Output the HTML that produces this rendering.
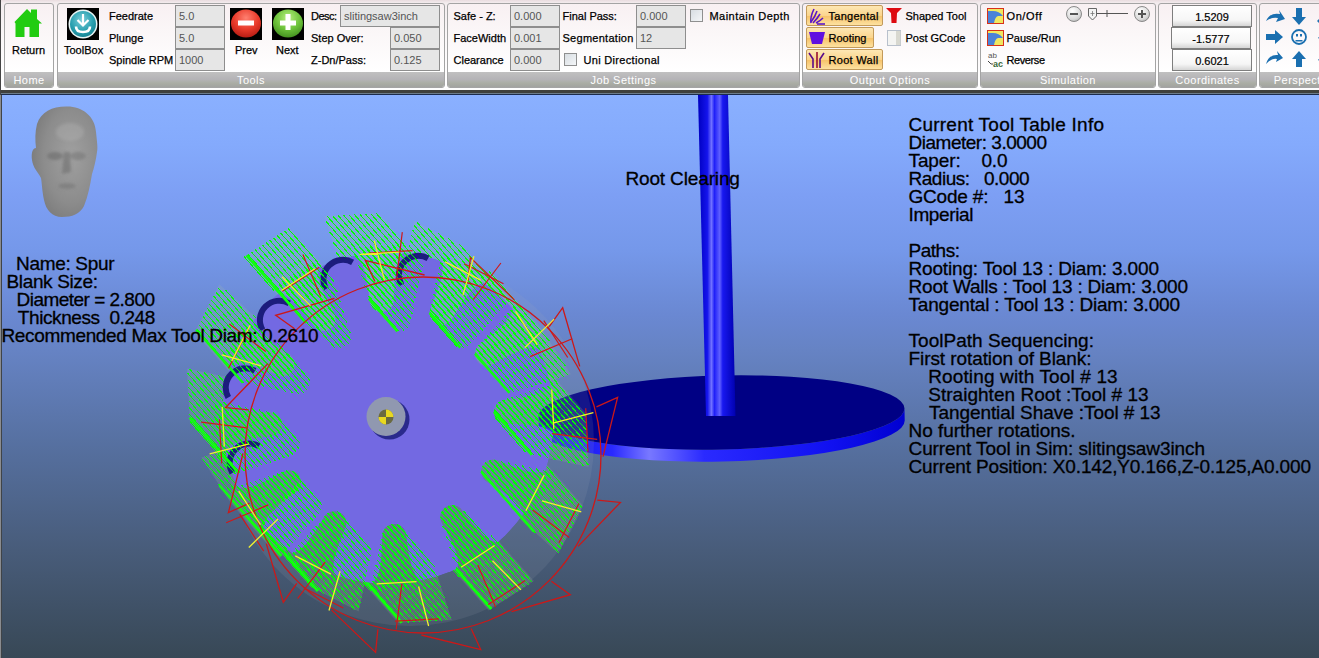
<!DOCTYPE html>
<html><head><meta charset="utf-8">
<style>
*{margin:0;padding:0;box-sizing:border-box}
html,body{width:1319px;height:658px;overflow:hidden;background:#fff;font-family:"Liberation Sans",sans-serif}
.a{position:absolute}
#rib{position:absolute;left:0;top:0;width:1319px;height:95px;background:linear-gradient(#e9dcdf 0px,#f3ecee 3px,#fbf8f9 40px,#ffffff 88px)}
.grp{position:absolute;top:3px;height:85px;border:1px solid #a4a4a4;border-radius:3px;background:linear-gradient(#f8f0f2 0px,#fbf7f8 30px,#ffffff 68px);overflow:hidden}
.grp .lb{position:absolute;left:0;right:0;bottom:0;height:15px;background:linear-gradient(#c0c0c0,#b4b3b6 50%,#aaada4 75%,#a2a3a0);color:#fff;font-size:11px;line-height:16px;text-align:center;overflow:hidden;letter-spacing:0.45px;white-space:nowrap}
.t{position:absolute;font-size:11px;line-height:13px;color:#000;white-space:pre;-webkit-text-stroke:0.25px #000}
.tb{position:absolute;height:22px;border:1px solid #8e8e8e;background:#e6e6e6;font-size:11px;line-height:13px;color:#555;padding:4px 0 0 3px;white-space:pre}
.cb{position:absolute;width:13px;height:13px;border:1px solid #8f8f8f;background:linear-gradient(135deg,#d8dde2,#f4f6f8)}
.ob{position:absolute;height:21px;border:1px solid #c39a5a;border-radius:2px;background:linear-gradient(#fde7b4,#fbd58d 50%,#f7c46c 55%,#fde1a0)}
.cd{position:absolute;height:22px;border:1px solid #7e7e7e;background:linear-gradient(#ffffff 0,#f6f6f6 70%,#e0e0e0 90%,#d6d6d6);font-size:11px;line-height:13px;color:#000;text-align:center;padding-top:5px;-webkit-text-stroke:0.2px #000}
#vp{position:absolute;left:2px;top:95px;width:1317px;height:563px;background:linear-gradient(#8ab0ff 0px,#84aafc 50px,#7d9ff4 100px,#7598ea 155px,#6a88d2 220px,#6683c4 255px,#5670a0 350px,#485c7a 455px,#384856 563px)}
.vt{position:absolute;font-size:19px;line-height:18px;color:#000;white-space:pre;-webkit-text-stroke:0.3px #000}
</style></head><body>
<div id="rib">
  <!-- bottom dark band -->
  <div class="a" style="left:0;top:88px;width:1319px;height:2px;background:#fdfdfd"></div>
  <div class="a" style="left:0;top:90px;width:1319px;height:3px;background:#3f403c"></div>
  <div class="a" style="left:0;top:93px;width:1319px;height:1px;background:#6c7c8a"></div>
  <div class="a" style="left:0;top:94px;width:1319px;height:1px;background:#1c2c4c"></div>
  <div class="a" style="left:0;top:0;width:1px;height:95px;background:#444"></div>

  <!-- Home -->
  <div class="grp" style="left:4px;width:50px"><div class="lb">Home</div></div>
  <!-- Tools -->
  <div class="grp" style="left:57px;width:388px"><div class="lb">Tools</div></div>
  <div class="grp" style="left:447px;width:353px"><div class="lb">Job Settings</div></div>
  <div class="grp" style="left:802px;width:176px"><div class="lb">Output Options</div></div>
  <div class="grp" style="left:980px;width:176px"><div class="lb">Simulation</div></div>
  <div class="grp" style="left:1158px;width:99px"><div class="lb">Coordinates</div></div>
  <div class="grp" style="left:1259px;width:92px"><div class="lb">Perspective</div></div>

  
  <!-- Home content -->
  <svg class="a" style="left:13px;top:7px" width="31" height="32" viewBox="0 0 31 32">
    <path d="M1.5 15 L14 2 L18 6 L18 2.5 L24 2.5 L24 12 L29 16.5 L26 16.5 L26 30 L16.5 30 L16.5 20 L11.5 20 L11.5 30 L2.5 30 L2.5 16.5 Z" fill="#22cc11"/>
  </svg>
  <div class="t" style="left:12px;top:44px">Return</div>
  <!-- ToolBox -->
  <div class="a" style="left:67px;top:8px;width:32px;height:32px;background:#000"></div>
  <svg class="a" style="left:67px;top:8px" width="32" height="32" viewBox="0 0 32 32">
    <defs><radialGradient id="tbg" cx="0.45" cy="0.35" r="0.7"><stop offset="0" stop-color="#7fd0dc"/><stop offset="0.6" stop-color="#2aa0b0"/><stop offset="1" stop-color="#138090"/></radialGradient></defs>
    <circle cx="16" cy="16" r="14.5" fill="#e8f4f4"/><circle cx="16" cy="16" r="13" fill="url(#tbg)"/>
    <path d="M16 6 V17 M10.5 12 L16 17.5 L21.5 12" stroke="#fff" stroke-width="2.2" fill="none"/>
    <path d="M9 18.5 Q9 24 16 24 Q23 24 23 18.5" stroke="#fff" stroke-width="2.6" fill="none"/>
  </svg>
  <div class="t" style="left:64px;top:44px">ToolBox</div>
  <div class="t" style="left:109px;top:9.5px">Feedrate</div>
  <div class="t" style="left:109px;top:31.5px">Plunge</div>
  <div class="t" style="left:109px;top:53.5px">Spindle RPM</div>
  <div class="tb" style="left:175px;top:5px;width:50px">5.0</div>
  <div class="tb" style="left:175px;top:27px;width:50px">5.0</div>
  <div class="tb" style="left:175px;top:49px;width:50px">1000</div>
  <!-- Prev / Next -->
  <div class="a" style="left:230px;top:8px;width:32px;height:32px;background:#000"></div>
  <svg class="a" style="left:230px;top:8px" width="32" height="32" viewBox="0 0 32 32">
    <defs><radialGradient id="rg" cx="0.5" cy="0.3" r="0.75"><stop offset="0" stop-color="#ff8070"/><stop offset="0.55" stop-color="#e83a2a"/><stop offset="1" stop-color="#b01810"/></radialGradient>
    <radialGradient id="gg" cx="0.5" cy="0.3" r="0.75"><stop offset="0" stop-color="#b8f080"/><stop offset="0.55" stop-color="#6cc23a"/><stop offset="1" stop-color="#3e8a1c"/></radialGradient></defs>
    <ellipse cx="16" cy="15.5" rx="15" ry="14" fill="url(#rg)"/>
    <rect x="8" y="12.5" width="16" height="5" fill="#fff"/>
  </svg>
  <div class="t" style="left:235px;top:44px">Prev</div>
  <div class="a" style="left:272px;top:8px;width:32px;height:32px;background:#000"></div>
  <svg class="a" style="left:272px;top:8px" width="32" height="32" viewBox="0 0 32 32">
    <ellipse cx="16" cy="15.5" rx="15" ry="14" fill="url(#gg)"/>
    <rect x="8" y="12.5" width="16" height="5" fill="#fff"/><rect x="13.5" y="6" width="5" height="16" fill="#fff"/>
  </svg>
  <div class="t" style="left:276px;top:44px">Next</div>
  <div class="t" style="left:311px;top:9.5px;letter-spacing:-0.5px">Desc:</div>
  <div class="t" style="left:311px;top:31.5px">Step Over:</div>
  <div class="t" style="left:311px;top:53.5px">Z-Dn/Pass:</div>
  <div class="tb" style="left:340px;top:5px;width:100px">slitingsaw3inch</div>
  <div class="tb" style="left:390px;top:27px;width:50px">0.050</div>
  <div class="tb" style="left:390px;top:49px;width:50px">0.125</div>
  <!-- Job settings -->
  <div class="t" style="left:453.5px;top:9.5px">Safe - Z:</div>
  <div class="t" style="left:453.5px;top:31.5px">FaceWidth</div>
  <div class="t" style="left:453.5px;top:53.5px">Clearance</div>
  <div class="tb" style="left:510px;top:5px;width:50px">0.000</div>
  <div class="tb" style="left:510px;top:27px;width:50px">0.001</div>
  <div class="tb" style="left:510px;top:49px;width:50px">0.000</div>
  <div class="t" style="left:562.5px;top:9.5px">Final Pass:</div>
  <div class="t" style="left:562.5px;top:31.5px;letter-spacing:0.27px">Segmentation</div>
  <div class="tb" style="left:636px;top:5px;width:50px">0.000</div>
  <div class="tb" style="left:636px;top:27px;width:50px">12</div>
  <div class="cb" style="left:564px;top:53px"></div>
  <div class="t" style="left:583.5px;top:53.5px;letter-spacing:0.32px">Uni Directional</div>
  <div class="cb" style="left:690px;top:9px"></div>
  <div class="t" style="left:709.5px;top:9.5px;letter-spacing:0.46px">Maintain Depth</div>
  <!-- Output options -->
  <div class="ob" style="left:806px;top:5px;width:77px"></div>
  <div class="ob" style="left:806px;top:27px;width:68px"></div>
  <div class="ob" style="left:806px;top:49px;width:77px"></div>
  <svg class="a" style="left:808px;top:7px" width="18" height="18" viewBox="0 0 18 18">
    <g stroke="#5a16c8" stroke-width="1.6" fill="none">
    <path d="M3 16 Q2 10 6 2"/><path d="M3 15 Q7 10 9 4"/><path d="M5 16 Q9 12 12 7"/><path d="M8 16 Q12 14 15 11"/><path d="M9 17 L17 17"/></g>
  </svg>
  <div class="t" style="left:828.5px;top:9.5px;letter-spacing:0.28px">Tangental</div>
  <svg class="a" style="left:808px;top:31px" width="18" height="14" viewBox="0 0 18 14">
    <path d="M1 1 L17 1 L14 13 L4 13 Z" fill="#6010e0"/>
  </svg>
  <div class="t" style="left:828.5px;top:31.5px">Rooting</div>
  <svg class="a" style="left:808px;top:51px" width="18" height="18" viewBox="0 0 18 18">
    <g stroke="#5a0a8a" stroke-width="1.6" fill="none"><path d="M1 2 L5 8 L5 17"/><path d="M9 1 L9 17" stroke="#9a1030"/><path d="M16 2 L12 8 L12 17"/></g>
  </svg>
  <div class="t" style="left:828.5px;top:53.5px;letter-spacing:0.3px">Root Wall</div>
  <svg class="a" style="left:886px;top:8px" width="16" height="15" viewBox="0 0 16 15">
    <path d="M0 0 L16 0 L11 5 L10.5 15 L5.5 15 L5 5 Z" fill="#dd0a10"/>
  </svg>
  <div class="t" style="left:905.5px;top:9.5px">Shaped Tool</div>
  <svg class="a" style="left:887px;top:30px" width="15" height="17" viewBox="0 0 15 17">
    <rect x="0.5" y="0.5" width="13" height="15" fill="#f4f4f2" stroke="#b8c0cc"/><rect x="9" y="1" width="4.5" height="14" fill="#d8d8d0"/>
  </svg>
  <div class="t" style="left:905.5px;top:31.5px">Post GCode</div>
  <!-- Simulation -->
  <svg class="a" style="left:987px;top:8px" width="17" height="16" viewBox="0 0 17 16">
    <rect x="0.5" y="0.5" width="16" height="15" fill="#f0e860" stroke="#d83018"/>
    <path d="M1 3 L6 3 Q12 3 16 8 L11 8 Q8 9 7 15 L1 15 Z" fill="#4a82d8"/>
  </svg>
  <div class="t" style="left:1006.5px;top:9.5px;letter-spacing:0.6px">On/Off</div>
  <svg class="a" style="left:987px;top:30px" width="17" height="16" viewBox="0 0 17 16">
    <rect x="0.5" y="0.5" width="16" height="15" fill="#f0e860" stroke="#d83018"/>
    <path d="M1 3 L6 3 Q12 3 16 8 L11 8 Q8 9 7 15 L1 15 Z" fill="#4a82d8"/>
  </svg>
  <div class="t" style="left:1006.5px;top:31.5px">Pause/Run</div>
  <svg class="a" style="left:987px;top:51px" width="18" height="17" viewBox="0 0 18 17">
    <text x="1" y="7" font-family="Liberation Sans" font-size="8" fill="#555">ab</text>
    <text x="6" y="15.5" font-family="Liberation Sans" font-size="9" font-weight="bold" fill="#3a6a3a">ac</text>
    <path d="M1 10 L4 13 L6 13" stroke="#444" fill="none" stroke-width="1"/>
  </svg>
  <div class="t" style="left:1006.5px;top:53.5px;letter-spacing:-0.4px">Reverse</div>
  <svg class="a" style="left:1064px;top:5px" width="90" height="19" viewBox="0 0 90 19">
    <defs><radialGradient id="cg" cx="0.4" cy="0.3" r="0.8"><stop offset="0" stop-color="#ffffff"/><stop offset="0.7" stop-color="#d8d8d8"/><stop offset="1" stop-color="#a8a8a8"/></radialGradient></defs>
    <circle cx="10" cy="9" r="7.5" fill="url(#cg)" stroke="#8a8a8a"/>
    <rect x="6" y="8" width="8" height="2" fill="#555"/>
    <circle cx="78" cy="9" r="7.5" fill="url(#cg)" stroke="#8a8a8a"/>
    <rect x="74" y="8" width="8" height="2" fill="#555"/><rect x="77" y="5" width="2" height="8" fill="#555"/>
    <path d="M33 8.5 H64 M43 5 V12" stroke="#555" stroke-width="1"/>
    <path d="M24.5 3.5 H32.5 V11 L28.5 15 L24.5 11 Z" fill="#f4f4f4" stroke="#666"/>
    <path d="M28.5 6 V11 M26.5 8.5 H30.5" stroke="#777" stroke-width="0.8"/>
  </svg>
  <!-- Coordinates -->
  <div class="cd" style="left:1172px;top:5px;width:80px">1.5209</div>
  <div class="cd" style="left:1171px;top:27px;width:80px">-1.5777</div>
  <div class="cd" style="left:1172px;top:49px;width:80px">0.6021</div>
  <!-- Perspective -->
  <svg class="a" style="left:1262px;top:5px" width="57" height="64" viewBox="0 0 57 64">
    <g fill="#1a6fb0">
      <path d="M4 16 Q8 7 18 9 L17 5 L23 14 L14 17 L16 13 Q9 12 4 16 Z"/>
      <path d="M34 3 H40 V12 H44 L37 20 L30 12 H34 Z"/>
      <path d="M4 29 H13 V25 L21 32 L13 39 V35 H4 Z"/>
      <circle cx="37" cy="32" r="7" fill="none" stroke="#1a6fb0" stroke-width="1.8"/>
      <rect x="34" y="29" width="2" height="2.5"/><rect x="38" y="29" width="2" height="2.5"/><rect x="33.5" y="35" width="7" height="1.5"/>
      <path d="M4 59 Q7 49 16 50 L15 46 L21 53 L14 57 L15 54 Q9 53 4 59 Z"/>
      <path d="M34 62 H40 V54 H44 L37 46 L30 54 H34 Z"/>
      <path d="M55 16 L57 14 V18 Z"/>
      <rect x="56" y="32" width="1" height="1.5" opacity="0.6"/>
      <rect x="56" y="54" width="1" height="1.5" opacity="0.6"/>
    </g>
  </svg>

</div>
<div id="vp"></div>
<div class="a" style="left:0;top:95px;width:1px;height:563px;background:#8a8c90"></div><div class="a" style="left:1px;top:95px;width:1px;height:563px;background:#404448"></div>
<!--SCENE-->
<svg class="a" style="left:0;top:0" width="1319" height="658" viewBox="0 0 1319 658"><clipPath id="vpc"><rect x="2" y="95" width="1317" height="563"/></clipPath><g clip-path="url(#vpc)"><defs>
<radialGradient id="hg" cx="0.6" cy="0.45" r="0.7"><stop offset="0" stop-color="#a0a0a0"/><stop offset="0.6" stop-color="#8c8c8c"/><stop offset="1" stop-color="#767676"/></radialGradient>
<linearGradient id="shaft" x1="0" x2="1" y1="0" y2="0"><stop offset="0" stop-color="#0000c0"/><stop offset="0.25" stop-color="#1414ec"/><stop offset="0.36" stop-color="#7070ff"/><stop offset="0.44" stop-color="#2020f8"/><stop offset="0.58" stop-color="#6060ff"/><stop offset="0.66" stop-color="#1818f0"/><stop offset="1" stop-color="#0000b0"/></linearGradient>
<linearGradient id="rim" x1="0" x2="1" y1="0" y2="0"><stop offset="0" stop-color="#0a0ae0"/><stop offset="0.2" stop-color="#2a2aff"/><stop offset="0.3" stop-color="#7878ff"/><stop offset="0.45" stop-color="#2a2aff"/><stop offset="0.8" stop-color="#1010f0"/><stop offset="1" stop-color="#0000d0"/></linearGradient>
<filter id="blur1" x="-20%" y="-20%" width="140%" height="140%"><feGaussianBlur stdDeviation="1.6"/></filter>
</defs>
<path d="M66 106.5 C82 106 95 116 96 132 C97 142 98 148 97 152 C96 160 94 168 92 174 C90 186 88 196 84 206 C80 214 72 217 62 217 C52 217 46 210 44 200 C42 190 42 184 41 178 C38 172 33 168 32 160 C31 152 33 148 36 148 C35 140 35 132 37 124 C41 112 52 106.5 66 106.5 Z" fill="url(#hg)"/>
<g filter="url(#blur1)"><ellipse cx="55" cy="156" rx="8" ry="4" fill="#6a6a6a" opacity="0.6"/><ellipse cx="78" cy="156" rx="8" ry="4" fill="#707070" opacity="0.5"/><path d="M64 152 L70 152 L71 172 L62 174 Z" fill="#606060" opacity="0.45"/><ellipse cx="67" cy="186" rx="9" ry="3" fill="#6a6a6a" opacity="0.4"/><ellipse cx="70" cy="132" rx="14" ry="9" fill="#b4b4b4" opacity="0.35"/></g>
<g transform="rotate(-1.3 721.5 412.5)">
<path d="M538.5,412.5 A183,37 0 0 0 904.5,412.5 L904.5,424.5 A183,37 0 0 1 538.5,424.5 Z" fill="url(#rim)"/>
<ellipse cx="721.5" cy="412.5" rx="183" ry="37" fill="#000084"/>
</g>
<path d="M698,95 L728,95 L735.5,416 L706,416 Z" fill="url(#shaft)"/>
<circle cx="410.0" cy="442.0" r="184" fill="#a0acb8" opacity="0.13"/>
<path d="M453.4,440.7 L453.7,437.5 L454.7,434.6 L456.5,432.0 L458.9,430.0 L461.7,428.6 L464.8,428.1 L467.9,428.3 L525.8,440.5 L582.9,505.4 L558.4,553.5 L514.5,513.9 L457.4,449.0 L455.3,446.6 L454.0,443.7 Z" fill="#a8c4a8" opacity="0.18"/>
<path d="M412.5,486.1 L412.8,482.9 L413.8,480.0 L415.6,477.4 L418.0,475.4 L420.8,474.0 L423.9,473.4 L427.0,473.7 L430.0,474.7 L432.6,476.5 L476.6,516.0 L533.9,581.1 L488.6,610.6 L431.3,545.4 L413.1,489.1 Z" fill="#a8c4a8" opacity="0.18"/>
<path d="M342.3,559.6 L354.7,501.8 L355.7,498.9 L357.5,496.3 L359.9,494.2 L362.7,492.9 L365.8,492.3 L368.9,492.6 L371.9,493.6 L374.5,495.4 L402.2,526.9 L430.1,558.6 L432.1,561.0 L433.5,563.8 L451.8,620.0 L397.9,622.8 Z" fill="#a8c4a8" opacity="0.18"/>
<path d="M258.1,527.5 L297.8,483.6 L300.1,481.5 L303.0,480.2 L306.1,479.6 L309.2,479.9 L312.1,480.9 L314.7,482.7 L342.5,514.2 L367.2,542.3 L369.2,544.7 L370.5,547.5 L371.1,550.6 L370.9,553.7 L358.7,611.6 L310.6,587.1 Z" fill="#a8c4a8" opacity="0.18"/>
<path d="M201.3,457.5 L257.6,439.3 L260.7,438.8 L263.8,439.0 L266.7,440.0 L269.3,441.8 L318.0,497.2 L320.1,499.5 L321.4,502.4 L322.0,505.4 L321.7,508.6 L320.7,511.5 L318.9,514.1 L279.4,558.1 L258.5,534.3 L230.7,502.8 Z" fill="#a8c4a8" opacity="0.18"/>
<path d="M187.1,368.5 L244.9,380.9 L247.9,382.0 L250.4,383.7 L295.8,435.3 L297.8,437.6 L299.2,440.5 L299.7,443.5 L299.5,446.7 L298.5,449.6 L296.7,452.2 L294.3,454.2 L291.5,455.6 L235.2,474.0 L217.6,454.0 L189.9,422.4 Z" fill="#a8c4a8" opacity="0.18"/>
<path d="M194.7,332.4 L219.3,284.3 L263.1,324.0 L306.4,373.2 L308.5,375.6 L309.8,378.4 L310.4,381.5 L310.1,384.6 L309.1,387.5 L307.3,390.1 L304.9,392.2 L302.1,393.5 L299.0,394.1 L295.9,393.8 L238.0,381.6 L222.5,364.0 Z" fill="#a8c4a8" opacity="0.18"/>
<path d="M243.9,256.9 L289.2,227.5 L332.3,276.5 L350.5,332.8 L351.1,335.9 L350.8,339.0 L349.8,341.9 L348.0,344.5 L345.6,346.5 L342.8,347.9 L339.7,348.5 L336.6,348.2 L333.6,347.2 L331.1,345.4 L287.0,305.9 L271.7,288.5 Z" fill="#a8c4a8" opacity="0.18"/>
<path d="M324.3,216.1 L378.2,213.3 L423.0,264.2 L410.6,322.0 L409.6,325.0 L407.8,327.6 L405.4,329.6 L402.6,331.0 L399.5,331.5 L396.4,331.3 L393.4,330.2 L390.9,328.5 L346.0,277.5 L344.0,275.2 L342.7,272.3 Z" fill="#a8c4a8" opacity="0.18"/>
<path d="M401.8,282.0 L402.1,278.8 L414.3,221.0 L462.4,245.5 L490.1,277.0 L510.4,300.0 L470.7,343.9 L468.3,345.9 L465.5,347.2 L462.4,347.8 L459.3,347.6 L456.3,346.5 L453.8,344.8 L405.8,290.2 L403.8,287.9 L402.4,285.0 Z" fill="#a8c4a8" opacity="0.18"/>
<path d="M447.2,322.8 L447.5,319.7 L448.5,316.8 L450.3,314.2 L489.8,270.1 L517.5,301.7 L541.5,328.9 L570.9,374.2 L514.6,392.4 L511.6,393.0 L508.4,392.7 L505.5,391.7 L502.9,389.9 L478.9,362.7 L451.2,331.1 L449.2,328.7 L447.8,325.9 Z" fill="#a8c4a8" opacity="0.18"/>
<path d="M466.1,380.9 L466.4,377.8 L467.4,374.8 L469.2,372.3 L471.6,370.2 L474.4,368.9 L530.6,350.5 L585.7,413.1 L588.5,467.0 L530.7,454.6 L527.7,453.6 L525.1,451.8 L470.1,389.2 L468.0,386.8 L466.7,384.0 Z" fill="#a8c4a8" opacity="0.18"/>
<path d="M523.3,440.0 L552.8,473.5 M516.3,438.5 L550.7,477.6 M509.2,437.0 L548.6,481.7 M502.2,435.5 L546.5,485.8 M495.2,434.1 L544.4,490.0 M488.2,432.6 L542.3,494.1 M481.1,431.1 L540.2,498.2 M474.1,429.6 L538.1,502.3 M467.2,428.2 L536.0,506.4 M461.8,428.6 L533.9,510.6 M457.9,430.8 L531.8,514.7 M455.1,434.0 L529.7,518.8 M453.6,438.8 L510.1,503.0" stroke="#00ff00" stroke-width="1" shape-rendering="crispEdges"/>
<path d="M453.5,440.0 L534.0,531.5" stroke="#10ff10" stroke-width="2.5"/>
<path d="M467.1,507.5 L503.1,548.4 M439.9,483.1 L499.4,550.7 M425.8,473.6 L495.8,553.1 M420.5,474.1 L492.1,555.5 M416.8,476.4 L488.5,557.8 M414.0,479.7 L484.8,560.2 M412.6,484.7 L481.2,562.6 M477.5,564.9 L414.4,493.2 M473.9,567.3 L417.7,503.5 M470.2,569.7 L421.1,513.8 M466.6,572.0 L424.4,524.1 M463.0,574.4 L427.7,534.4 M459.3,576.8 L431.0,544.6" stroke="#00ff00" stroke-width="1" shape-rendering="crispEdges"/>
<path d="M491.1,608.9 L429.0,538.3" stroke="#10ff10" stroke-width="2.5"/>
<path d="M370.5,493.1 L406.1,533.6 M364.3,492.6 L409.4,543.9 M360.0,494.2 L412.8,554.3 M356.9,497.2 L416.2,564.6 M354.8,501.4 L419.6,575.0 M353.7,506.6 L423.0,585.3 M352.5,511.8 L420.1,588.6 M351.4,517.0 L414.6,588.8 M350.3,522.3 L409.1,589.1 M349.2,527.5 L403.7,589.4 M348.1,532.8 L398.2,589.7 M346.9,538.0 L392.7,590.0 M345.8,543.2 L387.2,590.3 M344.7,548.5 L381.8,590.6 M343.6,553.7 L376.3,590.9 M342.4,558.9 L370.8,591.1" stroke="#00ff00" stroke-width="1" shape-rendering="crispEdges"/>
<path d="M343.1,556.0 L401.7,622.6" stroke="#10ff10" stroke-width="2.5"/>
<path d="M310.7,480.4 L346.1,520.6 M304.5,479.9 L345.9,526.9 M300.2,481.5 L344.8,532.2 M297.0,484.4 L343.7,537.4 M294.1,487.6 L342.6,542.7 M291.2,490.8 L341.5,547.9 M288.3,494.0 L340.4,553.2 M285.4,497.2 L339.3,558.4 M282.5,500.5 L338.2,563.7 M279.6,503.7 L337.0,568.9 M276.7,506.9 L335.9,574.2 M273.8,510.1 L334.8,579.4 M270.9,513.3 L331.7,582.3 M268.0,516.5 L321.3,577.0 M265.1,519.7 L310.9,571.8 M262.2,522.9 L300.5,566.5 M259.3,526.1 L290.1,561.2" stroke="#00ff00" stroke-width="1" shape-rendering="crispEdges"/>
<path d="M260.1,525.2 L317.8,590.8" stroke="#10ff10" stroke-width="2.5"/>
<path d="M265.3,439.5 L300.7,479.7 M259.1,439.0 L300.4,485.9 M254.5,440.3 L298.2,489.9 M250.1,441.7 L295.4,493.2 M245.6,443.2 L292.5,496.4 M241.2,444.6 L289.6,499.6 M236.7,446.1 L286.7,502.9 M232.2,447.5 L283.8,506.1 M227.8,449.0 L280.9,509.3 M223.3,450.4 L278.0,512.5 M218.9,451.8 L275.1,515.8 M214.4,453.3 L272.2,519.0 M209.9,454.7 L269.3,522.2 M205.5,456.2 L266.4,525.4 M263.5,528.7 L202.3,459.1 M260.7,531.9 L218.5,483.9" stroke="#00ff00" stroke-width="1" shape-rendering="crispEdges"/>
<path d="M281.4,555.9 L219.5,485.5" stroke="#10ff10" stroke-width="2.5"/>
<path d="M246.4,381.5 L281.8,421.6 M239.2,379.7 L281.5,427.8 M232.1,378.2 L279.3,431.8 M225.0,376.6 L276.0,434.6 M218.0,375.1 L271.8,436.3 M210.9,373.6 L267.3,437.7 M203.9,372.1 L262.9,439.2 M196.8,370.6 L258.4,440.6 M189.7,369.1 L254.0,442.1 M249.5,443.5 L187.3,372.8 M245.1,445.0 L187.7,379.7 M240.6,446.5 L188.0,386.7 M236.2,447.9 L188.4,393.6 M231.7,449.4 L188.8,400.5 M227.3,450.8 L189.1,407.4 M222.8,452.3 L189.5,414.4 M218.4,453.7 L189.8,421.3" stroke="#00ff00" stroke-width="1" shape-rendering="crispEdges"/>
<path d="M238.4,472.9 L189.6,417.6" stroke="#10ff10" stroke-width="2.5"/>
<path d="M253.4,315.2 L294.5,361.9 M225.4,289.9 L294.2,368.1 M217.6,287.5 L292.0,372.1 M215.5,291.7 L288.7,374.8 M213.4,295.8 L284.3,376.3 M211.3,299.9 L278.0,375.7 M209.2,304.0 L271.0,374.2 M207.1,308.2 L263.9,372.7 M205.0,312.3 L256.9,371.2 M202.9,316.4 L249.9,369.7 M200.8,320.5 L242.8,368.3 M198.7,324.6 L235.8,366.8 M196.6,328.8 L228.8,365.3" stroke="#00ff00" stroke-width="1" shape-rendering="crispEdges"/>
<path d="M196.2,329.6 L242.9,382.7" stroke="#10ff10" stroke-width="2.5"/>
<path d="M287.9,228.3 L318.1,262.6 M284.3,230.7 L321.4,272.9 M280.7,233.1 L324.8,283.2 M277.0,235.4 L328.1,293.5 M273.4,237.8 L331.4,303.8 M269.7,240.2 L334.7,314.0 M266.1,242.5 L335.5,321.4 M262.4,244.9 L333.6,325.7 M258.8,247.3 L330.6,328.8 M255.1,249.6 L326.4,330.6 M251.5,252.0 L320.6,330.6 M247.9,254.4 L301.0,314.7 M244.2,256.7 L273.8,290.3" stroke="#00ff00" stroke-width="1" shape-rendering="crispEdges"/>
<path d="M246.5,255.3 L306.0,322.9" stroke="#10ff10" stroke-width="2.5"/>
<path d="M376.3,213.4 L405.6,246.6 M370.8,213.7 L404.4,251.9 M365.4,214.0 L403.3,257.1 M359.9,214.3 L402.2,262.3 M354.4,214.5 L401.1,267.6 M348.9,214.8 L400.0,272.8 M343.5,215.1 L398.8,278.1 M338.0,215.4 L397.7,283.3 M332.5,215.7 L396.6,288.5 M327.0,216.0 L395.5,293.8 M394.3,299.0 L326.0,221.3 M393.1,304.0 L329.4,231.7 M390.9,308.0 L332.8,242.0 M387.4,310.7 L336.1,252.4 M382.9,312.1 L339.5,262.7 M375.8,310.5 L343.1,273.3" stroke="#00ff00" stroke-width="1" shape-rendering="crispEdges"/>
<path d="M397.4,331.4 L341.0,267.3" stroke="#10ff10" stroke-width="2.5"/>
<path d="M458.8,243.6 L489.1,278.1 M448.4,238.3 L486.2,281.3 M438.0,233.0 L483.3,284.5 M427.6,227.8 L480.4,287.8 M417.2,222.5 L477.5,291.0 M413.5,224.7 L474.6,294.2 M412.4,230.0 L471.7,297.4 M411.3,235.2 L468.8,300.6 M410.2,240.5 L465.9,303.8 M409.1,245.7 L463.0,307.0 M408.0,251.0 L460.1,310.2 M406.9,256.2 L457.2,313.5 M405.7,261.5 L454.3,316.7 M404.6,266.7 L451.4,319.9 M403.5,272.0 L448.3,322.8 M402.4,277.2 L444.0,324.5 M438.1,324.2 L402.1,283.4" stroke="#00ff00" stroke-width="1" shape-rendering="crispEdges"/>
<path d="M401.9,281.3 L460.3,347.7" stroke="#10ff10" stroke-width="2.5"/>
<path d="M488.8,271.3 L523.2,310.3 M485.9,274.5 L539.3,335.2 M483.0,277.7 L544.6,347.7 M480.1,280.9 L540.2,349.2 M477.2,284.2 L535.7,350.6 M474.3,287.4 L531.2,352.0 M471.4,290.6 L526.8,353.5 M468.5,293.8 L522.3,354.9 M465.7,297.1 L517.9,356.4 M462.8,300.3 L513.4,357.8 M459.9,303.5 L508.9,359.2 M457.0,306.7 L504.5,360.7 M454.1,309.9 L500.0,362.1 M451.2,313.2 L495.6,363.6 M448.6,316.7 L491.1,365.0 M447.3,321.8 L485.9,365.6" stroke="#00ff00" stroke-width="1" shape-rendering="crispEdges"/>
<path d="M447.3,322.1 L509.5,392.8" stroke="#10ff10" stroke-width="2.5"/>
<path d="M529.1,351.0 L558.5,384.4 M524.6,352.5 L558.8,391.4 M520.2,353.9 L559.2,398.3 M515.7,355.4 L559.6,405.2 M511.3,356.8 L559.9,412.1 M506.8,358.3 L560.3,419.1 M502.4,359.7 L560.7,426.0 M497.9,361.2 L561.0,432.9 M493.5,362.6 L557.2,435.1 M489.0,364.1 L550.2,433.6 M484.6,365.6 L543.1,432.1 M480.1,367.0 L536.1,430.6 M475.7,368.5 L529.0,429.1 M471.5,370.3 L521.9,427.5 M468.5,373.3 L514.9,426.0 M466.5,377.5 L507.8,424.5 M500.2,422.4 L467.0,384.6" stroke="#00ff00" stroke-width="1" shape-rendering="crispEdges"/>
<path d="M466.2,380.2 L531.8,454.9" stroke="#10ff10" stroke-width="2.5"/>
<mask id="gm" maskUnits="userSpaceOnUse" x="0" y="0" width="1319" height="658"><rect x="0" y="0" width="1319" height="658" fill="black"/>
<circle cx="388.0" cy="418.0" r="166" fill="white"/>
<path d="M487.7,482.3 L485.1,480.5 L483.1,478.1 L481.7,475.3 L481.2,472.2 L481.4,469.1 L482.4,466.1 L484.2,463.5 L486.6,461.5 L489.4,460.2 L492.5,459.6 L495.6,459.8 L498.6,460.9 L498.6,460.9 L514.4,467.3 L528.9,471.8 L537.4,472.8 L547.3,471.1 L560.3,467.6 L611.1,486.8 L574.8,558.1 L529.4,528.2 L524.6,515.6 L520.2,506.7 L514.4,500.4 L502.2,491.3 L487.7,482.3 Z" fill="black"/>
<path d="M442.2,523.5 L440.9,520.7 L440.3,517.6 L440.5,514.5 L441.6,511.5 L443.3,508.9 L445.7,506.9 L448.6,505.6 L451.6,505.0 L454.8,505.2 L457.7,506.3 L460.3,508.0 L462.3,510.4 L462.3,510.4 L472.8,523.9 L483.1,535.1 L490.0,540.2 L499.4,543.6 L512.4,547.1 L546.8,589.1 L479.7,632.7 L455.3,584.1 L457.4,570.8 L458.1,560.9 L456.3,552.5 L450.2,538.6 L442.2,523.5 Z" fill="black"/>
<path d="M382.2,536.5 L382.4,533.3 L383.5,530.4 L385.3,527.8 L387.6,525.8 L390.5,524.4 L393.5,523.9 L396.7,524.1 L399.6,525.1 L402.2,526.9 L404.2,529.3 L405.6,532.1 L406.2,535.2 L406.2,535.2 L408.5,552.1 L411.8,567.0 L415.2,574.8 L421.7,582.5 L431.2,592.0 L440.0,645.6 L360.1,649.8 L363.3,595.5 L371.7,585.1 L377.3,576.8 L379.9,568.6 L381.6,553.5 L382.2,536.5 Z" fill="black"/>
<path d="M323.7,517.7 L325.5,515.1 L327.9,513.1 L330.7,511.7 L333.8,511.2 L336.9,511.4 L339.9,512.4 L342.5,514.2 L344.5,516.6 L345.8,519.4 L346.4,522.5 L346.2,525.6 L345.1,528.6 L345.1,528.6 L338.7,544.4 L334.2,558.9 L333.2,567.4 L334.9,577.3 L338.4,590.3 L319.2,641.1 L247.9,604.8 L277.8,559.4 L290.4,554.6 L299.3,550.2 L305.6,544.4 L314.7,532.2 L323.7,517.7 Z" fill="black"/>
<path d="M282.5,472.2 L285.3,470.9 L288.4,470.3 L291.5,470.5 L294.5,471.6 L297.1,473.3 L299.1,475.7 L300.4,478.6 L301.0,481.6 L300.8,484.8 L299.7,487.7 L298.0,490.3 L295.6,492.3 L295.6,492.3 L282.1,502.8 L270.9,513.1 L265.8,520.0 L262.4,529.4 L258.9,542.4 L216.9,576.8 L173.3,509.7 L221.9,485.3 L235.2,487.4 L245.1,488.1 L253.5,486.3 L267.4,480.2 L282.5,472.2 Z" fill="black"/>
<path d="M269.5,412.2 L272.7,412.4 L275.6,413.5 L278.2,415.3 L280.2,417.6 L281.6,420.5 L282.1,423.5 L281.9,426.7 L280.9,429.6 L279.1,432.2 L276.7,434.2 L273.9,435.6 L270.8,436.2 L270.8,436.2 L253.9,438.5 L239.0,441.8 L231.2,445.2 L223.5,451.7 L214.0,461.2 L160.4,470.0 L156.2,390.1 L210.5,393.3 L220.9,401.7 L229.2,407.3 L237.4,409.9 L252.5,411.6 L269.5,412.2 Z" fill="black"/>
<path d="M288.3,353.7 L290.9,355.5 L292.9,357.9 L294.3,360.7 L294.8,363.8 L294.6,366.9 L293.6,369.9 L291.8,372.5 L289.4,374.5 L286.6,375.8 L283.5,376.4 L280.4,376.2 L277.4,375.1 L277.4,375.1 L261.6,368.7 L247.1,364.2 L238.6,363.2 L228.7,364.9 L215.7,368.4 L164.9,349.2 L201.2,277.9 L246.6,307.8 L251.4,320.4 L255.8,329.3 L261.6,335.6 L273.8,344.7 L288.3,353.7 Z" fill="black"/>
<path d="M333.8,312.5 L335.1,315.3 L335.7,318.4 L335.5,321.5 L334.4,324.5 L332.7,327.1 L330.3,329.1 L327.4,330.4 L324.4,331.0 L321.2,330.8 L318.3,329.7 L315.7,328.0 L313.7,325.6 L313.7,325.6 L303.2,312.1 L292.9,300.9 L286.0,295.8 L276.6,292.4 L263.6,288.9 L229.2,246.9 L296.3,203.3 L320.7,251.9 L318.6,265.2 L317.9,275.1 L319.7,283.5 L325.8,297.4 L333.8,312.5 Z" fill="black"/>
<path d="M393.8,299.5 L393.6,302.7 L392.5,305.6 L390.7,308.2 L388.4,310.2 L385.5,311.6 L382.5,312.1 L379.3,311.9 L376.4,310.9 L373.8,309.1 L371.8,306.7 L370.4,303.9 L369.8,300.8 L369.8,300.8 L367.5,283.9 L364.2,269.0 L360.8,261.2 L354.3,253.5 L344.8,244.0 L336.0,190.4 L415.9,186.2 L412.7,240.5 L404.3,250.9 L398.7,259.2 L396.1,267.4 L394.4,282.5 L393.8,299.5 Z" fill="black"/>
<path d="M452.3,318.3 L450.5,320.9 L448.1,322.9 L445.3,324.3 L442.2,324.8 L439.1,324.6 L436.1,323.6 L433.5,321.8 L431.5,319.4 L430.2,316.6 L429.6,313.5 L429.8,310.4 L430.9,307.4 L430.9,307.4 L437.3,291.6 L441.8,277.1 L442.8,268.6 L441.1,258.7 L437.6,245.7 L456.8,194.9 L528.1,231.2 L498.2,276.6 L485.6,281.4 L476.7,285.8 L470.4,291.6 L461.3,303.8 L452.3,318.3 Z" fill="black"/>
<path d="M493.5,363.8 L490.7,365.1 L487.6,365.7 L484.5,365.5 L481.5,364.4 L478.9,362.7 L476.9,360.3 L475.6,357.4 L475.0,354.4 L475.2,351.2 L476.3,348.3 L478.0,345.7 L480.4,343.7 L480.4,343.7 L493.9,333.2 L505.1,322.9 L510.2,316.0 L513.6,306.6 L517.1,293.6 L559.1,259.2 L602.7,326.3 L554.1,350.7 L540.8,348.6 L530.9,347.9 L522.5,349.7 L508.6,355.8 L493.5,363.8 Z" fill="black"/>
<path d="M506.5,423.8 L503.3,423.6 L500.4,422.5 L497.8,420.7 L495.8,418.4 L494.4,415.5 L493.9,412.5 L494.1,409.3 L495.1,406.4 L496.9,403.8 L499.3,401.8 L502.1,400.4 L505.2,399.8 L505.2,399.8 L522.1,397.5 L537.0,394.2 L544.8,390.8 L552.5,384.3 L562.0,374.8 L615.6,366.0 L619.8,445.9 L565.5,442.7 L555.1,434.3 L546.8,428.7 L538.6,426.1 L523.5,424.4 L506.5,423.8 Z" fill="black"/>
</mask>
<circle cx="388.0" cy="418.0" r="166" fill="#7369e2" mask="url(#gm)"/>
<path d="M232.3,472.9 A19.5,19.5 0 0 1 258.9,446.2" stroke="#1c1c7c" stroke-width="6" fill="none"/>
<path d="M228.3,397.4 A19.5,19.5 0 0 1 254.9,370.8" stroke="#1c1c7c" stroke-width="6" fill="none"/>
<path d="M262.6,330.1 A19.5,19.5 0 0 1 289.3,303.4" stroke="#1c1c7c" stroke-width="6" fill="none"/>
<path d="M326.0,288.9 A19.5,19.5 0 0 1 352.6,262.3" stroke="#1c1c7c" stroke-width="6" fill="none"/>
<path d="M401.5,284.9 A19.5,19.5 0 0 1 428.1,258.3" stroke="#1c1c7c" stroke-width="6" fill="none"/>
<path d="M550.1,471.3 L581.9,507.4 M543.0,469.8 L579.8,511.5 M536.0,468.3 L577.7,515.7 M529.0,466.9 L575.6,519.8 M521.9,465.4 L573.5,523.9 M514.9,463.9 L571.4,528.0 M507.9,462.4 L569.3,532.2 M500.9,460.9 L567.2,536.3 M494.0,459.7 L565.1,540.4 M488.9,460.4 L563.0,544.5 M485.2,462.7 L560.9,548.6 M482.5,466.1 L558.8,552.8 M481.2,471.2 L535.5,532.9" stroke="#00ff00" stroke-width="1" shape-rendering="crispEdges"/>
<path d="M491.0,535.6 L532.1,582.3 M463.8,511.2 L528.5,584.7 M452.7,505.1 L524.8,587.0 M447.7,505.9 L521.2,589.4 M444.1,508.3 L517.5,591.8 M441.5,511.8 L513.9,594.1 M440.3,517.1 L510.2,596.5 M506.6,598.9 L442.6,526.2 M503.0,601.2 L446.0,536.5 M499.3,603.6 L449.3,546.8 M495.7,606.0 L452.6,557.0 M492.0,608.3 L455.9,567.3" stroke="#00ff00" stroke-width="1" shape-rendering="crispEdges"/>
<path d="M397.0,524.2 L434.4,566.7 M391.3,524.3 L437.8,577.0 M387.2,526.1 L441.2,587.4 M384.3,529.2 L444.5,597.7 M382.4,533.6 L447.9,608.1 M381.3,538.8 L451.3,618.5 M380.1,544.1 L447.2,620.3 M379.0,549.3 L441.7,620.5 M377.9,554.5 L436.2,620.8 M376.8,559.8 L430.7,621.1 M375.6,565.0 L425.3,621.4 M374.5,570.2 L419.8,621.7 M373.4,575.5 L414.3,622.0 M372.3,580.7 L408.8,622.3 M371.2,585.9 L403.4,622.6" stroke="#00ff00" stroke-width="1" shape-rendering="crispEdges"/>
<path d="M337.3,511.5 L371.0,549.8 M331.6,511.6 L370.5,555.7 M327.5,513.4 L369.3,561.0 M324.4,516.4 L368.2,566.2 M321.5,519.6 L367.1,571.5 M318.6,522.8 L366.0,576.7 M315.7,526.0 L364.9,582.0 M312.8,529.2 L363.8,587.2 M309.9,532.4 L362.7,592.5 M307.0,535.6 L361.6,597.7 M304.1,538.9 L360.5,603.0 M301.2,542.1 L359.4,608.2 M298.3,545.3 L354.9,609.7 M295.4,548.5 L344.5,604.4 M292.5,551.7 L334.2,599.1 M289.5,554.9 L323.8,593.8 M286.6,558.1 L313.4,588.5" stroke="#00ff00" stroke-width="1" shape-rendering="crispEdges"/>
<path d="M291.9,470.7 L321.8,504.7 M286.2,470.7 L321.1,510.3 M281.7,472.0 L318.8,514.2 M277.2,473.5 L315.9,517.5 M272.7,474.9 L313.0,520.7 M268.3,476.4 L310.1,523.9 M263.8,477.8 L307.2,527.1 M259.4,479.2 L304.3,530.3 M254.9,480.7 L301.4,533.6 M250.4,482.1 L298.5,536.8 M246.0,483.6 L295.7,540.0 M241.5,485.0 L292.8,543.2 M237.1,486.4 L289.9,546.5 M232.6,487.9 L287.0,549.7 M284.1,552.9 L232.3,494.1 M281.2,556.1 L248.4,518.9" stroke="#00ff00" stroke-width="1" shape-rendering="crispEdges"/>
<path d="M273.0,412.6 L299.6,442.8 M265.9,411.0 L298.9,448.4 M258.9,409.5 L296.5,452.3 M251.8,408.0 L293.0,454.8 M244.7,406.5 L288.8,456.5 M237.7,404.9 L284.3,457.9 M230.6,403.4 L279.9,459.4 M223.6,401.9 L275.4,460.8 M216.5,400.4 L271.0,462.3 M266.5,463.7 L215.1,405.3 M262.1,465.2 L215.5,412.2 M257.6,466.7 L215.8,419.2 M253.2,468.1 L216.2,426.1 M248.7,469.6 L216.6,433.0 M244.3,471.0 L216.9,439.9 M239.8,472.5 L217.3,446.8 M235.4,473.9 L217.6,453.8" stroke="#00ff00" stroke-width="1" shape-rendering="crispEdges"/>
<path d="M277.2,343.2 L310.2,380.7 M249.3,317.9 L309.5,386.4 M245.1,319.6 L307.2,390.2 M243.0,323.8 L303.7,392.8 M240.9,327.9 L299.1,394.1 M238.8,332.0 L292.6,393.1 M236.7,336.1 L285.5,391.6 M234.6,340.3 L278.5,390.2 M232.5,344.4 L271.5,388.7 M230.4,348.5 L264.4,387.2 M228.3,352.6 L257.4,385.7 M226.2,356.7 L250.4,384.2 M224.1,360.9 L243.3,382.8" stroke="#00ff00" stroke-width="1" shape-rendering="crispEdges"/>
<path d="M315.2,260.2 L333.9,281.5 M311.5,262.6 L337.3,291.8 M307.9,264.9 L340.6,302.1 M304.3,267.3 L343.9,312.4 M300.6,269.7 L347.2,322.6 M297.0,272.0 L350.5,332.9 M293.3,274.4 L350.6,339.5 M289.7,276.8 L348.6,343.7 M286.0,279.1 L345.4,346.6 M282.4,281.5 L341.1,348.2 M278.7,283.9 L334.8,347.6 M275.1,286.2 L312.5,328.8" stroke="#00ff00" stroke-width="1" shape-rendering="crispEdges"/>
<path d="M403.3,245.0 L422.5,266.8 M397.8,245.2 L421.4,272.0 M392.3,245.5 L420.2,277.2 M386.9,245.8 L419.1,282.5 M381.4,246.1 L418.0,287.7 M375.9,246.4 L416.9,292.9 M370.4,246.7 L415.7,298.2 M365.0,247.0 L414.6,303.4 M359.5,247.3 L413.5,308.6 M354.0,247.5 L412.4,313.9 M411.3,319.1 L354.2,254.3 M409.9,324.1 L357.6,264.6 M407.5,327.8 L361.0,275.0 M403.9,330.3 L364.4,285.3 M399.3,331.5 L367.7,295.7" stroke="#00ff00" stroke-width="1" shape-rendering="crispEdges"/>
<path d="M485.1,274.4 L508.9,301.5 M474.7,269.1 L506.0,304.8 M464.3,263.8 L503.1,308.0 M453.9,258.5 L500.2,311.2 M443.5,253.3 L497.3,314.4 M441.1,257.0 L494.4,317.6 M440.0,262.2 L491.5,320.8 M438.9,267.5 L488.6,324.0 M437.8,272.7 L485.7,327.2 M436.7,278.0 L482.8,330.4 M435.6,283.2 L479.9,333.7 M434.4,288.5 L477.0,336.9 M433.3,293.7 L474.1,340.1 M432.2,299.0 L471.2,343.3 M431.1,304.2 L467.9,346.1 M430.0,309.5 L463.6,347.6 M457.1,346.8 L430.1,316.1" stroke="#00ff00" stroke-width="1" shape-rendering="crispEdges"/>
<path d="M516.1,303.3 L549.4,341.1 M513.2,306.5 L565.5,365.9 M510.4,309.7 L568.0,375.2 M507.5,312.9 L563.5,376.6 M504.6,316.1 L559.0,378.0 M501.7,319.4 L554.6,379.5 M498.8,322.6 L550.1,380.9 M495.9,325.8 L545.7,382.4 M493.0,329.0 L541.2,383.8 M490.1,332.3 L536.7,385.2 M487.2,335.5 L532.3,386.7 M484.3,338.7 L527.8,388.1 M481.4,341.9 L523.4,389.6 M478.5,345.1 L518.9,391.0 M476.1,348.9 L514.4,392.4 M475.0,354.1 L509.0,392.8" stroke="#00ff00" stroke-width="1" shape-rendering="crispEdges"/>
<path d="M556.2,382.7 L585.9,416.5 M551.7,384.2 L586.2,423.4 M547.3,385.7 L586.6,430.3 M542.8,387.1 L586.9,437.2 M538.4,388.6 L587.3,444.1 M533.9,390.0 L587.7,451.1 M529.5,391.5 L588.0,458.0 M525.0,392.9 L588.4,464.9 M520.6,394.4 L583.6,466.0 M516.1,395.8 L576.5,464.4 M511.7,397.3 L569.5,462.9 M507.2,398.7 L562.4,461.4 M502.8,400.2 L555.3,459.9 M498.8,402.2 L548.3,458.4 M495.9,405.3 L541.2,456.9 M494.1,409.8 L534.2,455.4 M525.5,452.1 L495.7,418.1" stroke="#00ff00" stroke-width="1" shape-rendering="crispEdges"/>
<path d="M481.2,471.5 L534.0,531.5" stroke="#10ff10" stroke-width="2.5"/>
<path d="M491.1,608.9 L456.7,569.8" stroke="#10ff10" stroke-width="2.5"/>
<path d="M370.8,587.5 L401.7,622.6" stroke="#10ff10" stroke-width="2.5"/>
<path d="M287.9,556.8 L317.8,590.8" stroke="#10ff10" stroke-width="2.5"/>
<path d="M281.4,555.9 L247.2,517.0" stroke="#10ff10" stroke-width="2.5"/>
<path d="M238.4,472.9 L217.4,449.1" stroke="#10ff10" stroke-width="2.5"/>
<path d="M224.0,361.1 L242.9,382.7" stroke="#10ff10" stroke-width="2.5"/>
<path d="M274.2,286.8 L306.0,322.9" stroke="#10ff10" stroke-width="2.5"/>
<path d="M397.4,331.4 L368.8,298.8" stroke="#10ff10" stroke-width="2.5"/>
<path d="M429.6,312.8 L460.3,347.7" stroke="#10ff10" stroke-width="2.5"/>
<path d="M475.0,353.7 L509.5,392.8" stroke="#10ff10" stroke-width="2.5"/>
<path d="M493.9,411.8 L531.8,454.9" stroke="#10ff10" stroke-width="2.5"/>
<circle cx="423.0" cy="455.0" r="178" stroke="#cc1818" stroke-width="1.3" fill="none"/>
<path d="M578.1,546.4 L620.4,502.4 L597.3,500.1 M511.6,611.7 L570.3,594.7 L551.4,581.2 M421.4,635.0 L480.7,649.6 L471.1,628.5 M331.6,610.1 L375.6,652.4 L377.9,629.3 M266.3,543.6 L283.3,602.3 L296.8,583.4 M243.0,453.4 L228.4,512.7 L249.5,503.1 M267.9,363.6 L225.6,407.6 L248.7,409.9 M334.4,298.3 L275.7,315.3 L294.6,328.8 M424.6,275.0 L365.3,260.4 L374.9,281.5 M514.4,299.9 L470.4,257.6 L468.1,280.7 M579.7,366.4 L562.7,307.7 L549.2,326.6 M603.0,456.6 L617.6,397.3 L596.5,406.9" stroke="#cc1818" stroke-width="1.3" fill="none"/>
<path d="M532.7,509.9 L569.2,537.5 M578.9,503.5 L559.0,542.7 M477.8,565.0 L495.6,607.1 M525.2,580.5 L488.3,604.5 M401.8,584.0 L396.2,629.4 M438.9,618.8 L395.0,621.1 M325.1,562.1 L297.6,598.5 M343.2,608.0 L304.0,588.0 M268.3,504.9 L226.2,522.7 M263.7,551.2 L239.7,514.2 M246.6,427.9 L201.2,422.2 M221.7,463.4 L219.4,419.4 M265.8,351.6 L229.3,324.1 M228.5,368.3 L248.5,329.0 M320.7,296.6 L302.9,254.5 M282.3,291.2 L319.2,267.3 M396.7,277.5 L402.3,232.1 M368.6,253.0 L412.5,250.7 M473.3,299.5 L500.9,263.0 M464.3,263.7 L503.5,283.7 M530.1,356.6 L572.2,338.8 M543.8,320.6 L567.7,357.5 M551.9,433.7 L597.2,439.3 M585.7,408.3 L588.0,452.3" stroke="#d01818" stroke-width="1.2" fill="none"/>
<path d="M542.0,500.8 L581.3,511.8 M544.1,475.1 L525.9,510.7 M492.5,560.7 L521.0,589.9 M494.6,545.5 L461.1,567.3 M418.6,586.5 L428.6,626.0 M416.6,581.7 L376.7,583.8 M340.1,571.2 L329.0,610.5 M330.9,574.1 L295.3,555.9 M278.0,519.0 L248.8,547.5 M260.5,524.6 L238.7,491.1 M249.1,443.8 L209.6,453.9 M224.3,446.6 L222.2,406.7 M261.0,365.8 L221.7,354.8 M231.9,360.9 L250.1,325.3 M310.5,305.9 L282.0,276.7 M281.4,290.5 L314.9,268.7 M384.4,280.2 L374.3,240.6 M359.4,254.3 L399.3,252.2 M462.9,295.4 L473.9,256.1 M445.1,261.9 L480.7,280.1 M524.9,347.6 L554.1,319.1 M515.5,311.4 L537.3,344.9 M553.9,422.8 L593.4,412.7 M551.7,389.4 L553.8,429.3" stroke="#f0f030" stroke-width="1.3" fill="none"/>
<circle cx="389.5" cy="419.5" r="20" fill="#2a2a8c"/>
<circle cx="386" cy="416.5" r="19.5" fill="#9098b0"/>
<circle cx="386" cy="417" r="7.5" fill="#6a6a40"/>
<path d="M386,417 L386,409.5 A7.5,7.5 0 0 1 393.5,417 Z M386,417 L386,424.5 A7.5,7.5 0 0 1 378.5,417 Z" fill="#e8d820"/></g></svg>
<!--/SCENE-->
<!--VT-->
<div class="vt" style="left:16.0px;top:255.1px;letter-spacing:-0.319px">Name: Spur</div>
<div class="vt" style="left:6.5px;top:273.1px;letter-spacing:-0.355px">Blank Size:</div>
<div class="vt" style="left:16.5px;top:291.1px;letter-spacing:-0.519px">Diameter = 2.800</div>
<div class="vt" style="left:17.8px;top:309.1px;letter-spacing:-0.409px">Thickness  0.248</div>
<div class="vt" style="left:1.5px;top:326.6px;letter-spacing:-0.347px">Recommended Max Tool Diam: 0.2610</div>
<div class="vt" style="left:625.4px;top:170.0px;letter-spacing:-0.139px">Root Clearing</div>
<div class="vt" style="left:908.5px;top:116.0px;letter-spacing:0.228px">Current Tool Table Info</div>
<div class="vt" style="left:908.5px;top:134.1px;letter-spacing:-0.483px">Diameter: 3.0000</div>
<div class="vt" style="left:908.5px;top:152.1px;letter-spacing:-0.104px">Taper:    0.0</div>
<div class="vt" style="left:908.5px;top:170.1px;letter-spacing:-0.479px">Radius:   0.000</div>
<div class="vt" style="left:908.5px;top:188.1px;letter-spacing:-0.191px">GCode #:   13</div>
<div class="vt" style="left:908.5px;top:206.1px;letter-spacing:-0.368px">Imperial</div>
<div class="vt" style="left:908.5px;top:242.1px;letter-spacing:-0.475px">Paths:</div>
<div class="vt" style="left:908.5px;top:260.1px;letter-spacing:-0.164px">Rooting: Tool 13 : Diam: 3.000</div>
<div class="vt" style="left:908.5px;top:278.1px;letter-spacing:-0.203px">Root Walls : Tool 13 : Diam: 3.000</div>
<div class="vt" style="left:908.5px;top:296.1px;letter-spacing:-0.186px">Tangental : Tool 13 : Diam: 3.000</div>
<div class="vt" style="left:908.5px;top:332.1px;letter-spacing:0.033px">ToolPath Sequencing:</div>
<div class="vt" style="left:908.5px;top:350.1px;letter-spacing:-0.078px">First rotation of Blank:</div>
<div class="vt" style="left:928.2px;top:368.1px;letter-spacing:0.138px">Rooting with Tool # 13</div>
<div class="vt" style="left:928.2px;top:386.1px;letter-spacing:0.032px">Straighten Root :Tool # 13</div>
<div class="vt" style="left:929.0px;top:404.1px;letter-spacing:-0.075px">Tangential Shave :Tool # 13</div>
<div class="vt" style="left:908.5px;top:422.1px;letter-spacing:-0.041px">No further rotations.</div>
<div class="vt" style="left:908.5px;top:440.1px;letter-spacing:-0.087px">Current Tool in Sim: slitingsaw3inch</div>
<div class="vt" style="left:908.5px;top:458.1px;letter-spacing:-0.139px">Current Position: X0.142,Y0.166,Z-0.125,A0.000</div>
<!--/VT-->
</body></html>
